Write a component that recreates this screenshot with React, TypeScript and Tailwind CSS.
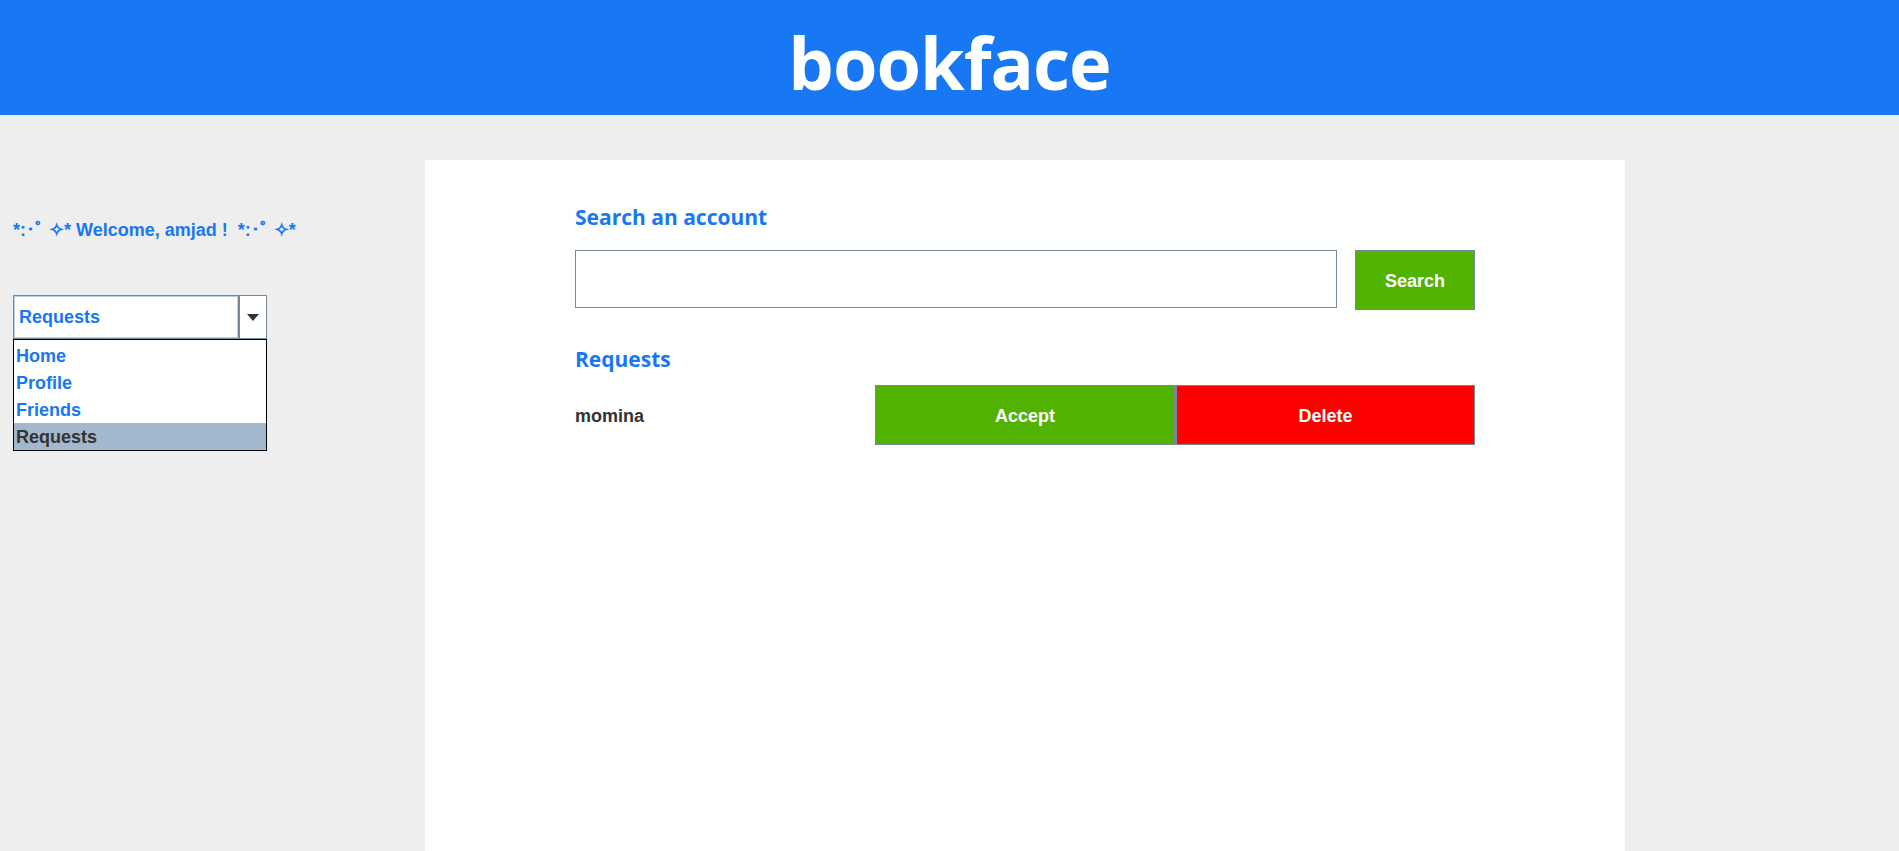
import React from "react";

const menuItems = ["Home", "Profile", "Friends", "Requests"];

const App: React.FC = () => {
  return (
    <div className="h-[851px] overflow-hidden bg-[#eeeeee] font-['Liberation_Sans',Arial,sans-serif]">
      <header className="h-[115px] bg-[#1877f2] flex items-center justify-center">
        <h1 className="font-['Open_Sans',sans-serif] text-[72px] font-bold leading-none text-white tracking-[-1px] pt-[8px]">
          bookface
        </h1>
      </header>

      <div className="flex">
        {/* sidebar */}
        <div className="w-[425px] shrink-0 pl-[13px] pt-[105px]">
          <p className="text-[18px] leading-[20px] font-bold text-[#1877f2] whitespace-pre">
            *:･ﾟ ✧* Welcome, amjad !  *:･ﾟ ✧*
          </p>

          <div className="mt-[55px] w-[254px]">
            <div className="flex h-[44px] border border-[#778899] bg-white">
              <div className="flex-1 flex items-center border border-[#b8cfe5] pl-[4px] text-[18px] font-bold text-[#1877f2]">
                Requests
              </div>
              <div className="w-[28px] flex items-center justify-center border-l-2 border-[#778899]">
                <svg width="12" height="7" viewBox="0 0 12 7">
                  <path d="M0 0 L12 0 L6 7 Z" fill="#333333" />
                </svg>
              </div>
            </div>
            <ul className="border border-black bg-white pt-[2px]">
              {menuItems.map((item) => (
                <li
                  key={item}
                  className={
                    item === "Requests"
                      ? "h-[27px] flex items-center pl-[2px] pt-[2px] text-[18px] font-bold text-[#333333] bg-[#a3b8cc]"
                      : "h-[27px] flex items-center pl-[2px] pt-[2px] text-[18px] font-bold text-[#1877f2]"
                  }
                >
                  {item}
                </li>
              ))}
            </ul>
          </div>
        </div>

        {/* main panel */}
        <main className="w-[1200px] h-[691px] mt-[45px] bg-white pt-[43px]">
          <div className="w-[900px] mx-auto">
            <h2 className="font-['Open_Sans',sans-serif] text-[21px] leading-[28px] font-bold text-[#1877f2]">
              Search an account
            </h2>
            <div className="mt-[19px] flex items-start gap-[18px]">
              <input
                type="text"
                className="w-[762px] h-[58px] border border-[#778899] bg-white outline-none px-2"
              />
              <button className="w-[120px] h-[60px] border border-[#778899] bg-[#52b202] text-white text-[18px] font-bold pt-[2px]">
                Search
              </button>
            </div>

            <h2 className="mt-[35px] font-['Open_Sans',sans-serif] text-[21px] leading-[28px] font-bold text-[#1877f2]">
              Requests
            </h2>
            <div className="mt-[12px] grid grid-cols-[300px_300px_300px] h-[60px]">
              <div className="flex items-center pt-[3px] text-[18px] font-bold text-[#333333]">momina</div>
              <button className="border border-[#778899] bg-[#52b202] text-white text-[18px] font-bold pt-[3px]">
                Accept
              </button>
              <button className="border border-l-2 border-[#778899] bg-[#ff0000] text-white text-[18px] font-bold pt-[3px]">
                Delete
              </button>
            </div>
          </div>
        </main>
      </div>
    </div>
  );
};

export default App;
